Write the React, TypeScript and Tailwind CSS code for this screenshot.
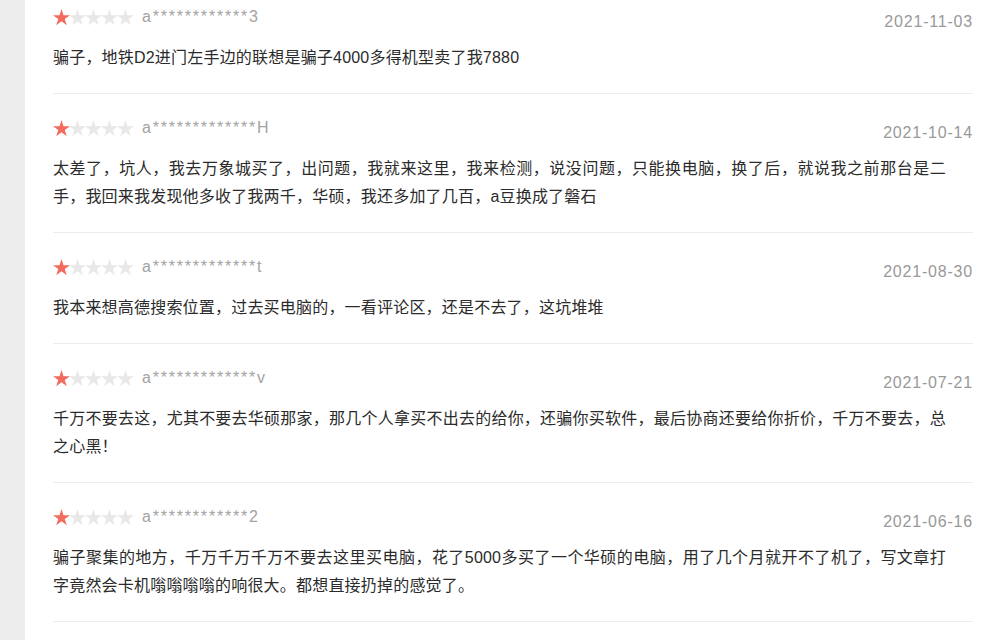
import React from 'react';

type Review = {
    user: string;
    date: string;
    rating: number;
    content: string;
};

const reviews: Review[] = [
    {
        user: 'a************3',
        date: '2021-11-03',
        rating: 1,
        content: '骗子，地铁D2进门左手边的联想是骗子4000多得机型卖了我7880',
    },
    {
        user: 'a*************H',
        date: '2021-10-14',
        rating: 1,
        content:
            '太差了，坑人，我去万象城买了，出问题，我就来这里，我来检测，说没问题，只能换电脑，换了后，就说我之前那台是二手，我回来我发现他多收了我两千，华硕，我还多加了几百，a豆换成了磐石',
    },
    {
        user: 'a*************t',
        date: '2021-08-30',
        rating: 1,
        content: '我本来想高德搜索位置，过去买电脑的，一看评论区，还是不去了，这坑堆堆',
    },
    {
        user: 'a*************v',
        date: '2021-07-21',
        rating: 1,
        content:
            '千万不要去这，尤其不要去华硕那家，那几个人拿买不出去的给你，还骗你买软件，最后协商还要给你折价，千万不要去，总之心黑！',
    },
    {
        user: 'a************2',
        date: '2021-06-16',
        rating: 1,
        content:
            '骗子聚集的地方，千万千万千万不要去这里买电脑，花了5000多买了一个华硕的电脑，用了几个月就开不了机了，写文章打字竟然会卡机嗡嗡嗡嗡的响很大。都想直接扔掉的感觉了。',
    },
];

function Star({ active }: { active: boolean }) {
    return (
        <svg width="17" height="17" viewBox="0 0 20 20" className={active ? 'text-[#f36b5c]' : 'text-[#e8e8e8]'}>
            <polygon
                fill="currentColor"
                points="10,0 12.36,7.26 20,7.26 13.81,11.74 16.17,19 10,14.51 3.83,19 6.19,11.74 0,7.26 7.64,7.26"
            />
        </svg>
    );
}

export default function App() {
    return (
        <div className="flex min-h-[640px] bg-white font-['Liberation_Sans','Noto_Sans_CJK_SC',sans-serif]">
            {/* left gutter */}
            <div className="w-[25px] shrink-0 bg-[#ededed]" />

            <div className="flex-1 pl-[28px] pr-[27px]">
                {reviews.map((r, i) => (
                    <div
                        key={r.date}
                        className={`border-b border-[#ececec] pb-[21px] ${i === 0 ? 'pt-[7px]' : 'pt-[24px]'}`}
                    >
                        {/* header: stars + user, date */}
                        <div className="flex items-start justify-between">
                            <div className="flex h-[20px] items-center gap-[8px]">
                                <div className="flex -space-x-px">
                                    {[1, 2, 3, 4, 5].map((n) => (
                                        <Star key={n} active={n <= r.rating} />
                                    ))}
                                </div>
                                <span className="text-[16px] leading-[20px] tracking-[1.8px] text-[#a3a3a3]">
                                    {r.user}
                                </span>
                            </div>
                            <span className="mt-[5px] text-[16px] leading-[20px] tracking-[0.8px] text-[#999]">
                                {r.date}
                            </span>
                        </div>

                        <p className="mt-[12px] w-[893px] text-justify text-[16px] leading-[28px] tracking-[0.2px] text-[#2b2b2b]">
                            {r.content}
                        </p>
                    </div>
                ))}
            </div>
        </div>
    );
}
